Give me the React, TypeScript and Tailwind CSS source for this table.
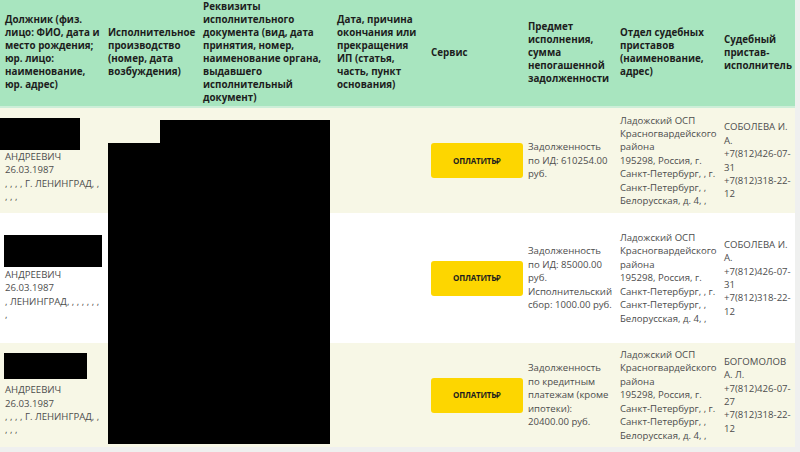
import React from "react";

const cols = "grid grid-cols-[104px_95px_134px_94px_97px_92px_104px_75px]";

const headers: string[][] = [
  ["Должник (физ.", "лицо: ФИО, дата и", "место рождения;", "юр. лицо:", "наименование,", "юр. адрес)"],
  ["Исполнительное", "производство", "(номер, дата", "возбуждения)"],
  ["Реквизиты", "исполнительного", "документа (вид, дата", "принятия, номер,", "наименование органа,", "выдавшего", "исполнительный", "документ)"],
  ["Дата, причина", "окончания или", "прекращения", "ИП (статья,", "часть, пункт", "основания)"],
  ["Сервис"],
  ["Предмет", "исполнения,", "сумма", "непогашенной", "задолженности"],
  ["Отдел судебных", "приставов", "(наименование,", "адрес)"],
  ["Судебный", "пристав-", "исполнитель"],
];

const osp = [
  "Ладожский ОСП",
  "Красногвардейского",
  "района",
  "195298, Россия, г.",
  "Санкт-Петербург, , г.",
  "Санкт-Петербург, ,",
  "Белорусская, д. 4, ,",
];

type Row = {
  height: string;
  bg: string;
  box: string;
  debtor: string[];
  subject: string[];
  bailiff: string[];
};

const rows: Row[] = [
  {
    height: "h-[105px]",
    bg: "bg-[#f7f7e6]",
    box: "ml-[-5px] h-[32px] w-[80px]",
    debtor: ["АНДРЕЕВИЧ", "26.03.1987", ", , , , Г. ЛЕНИНГРАД, ,", ", , ,"],
    subject: ["Задолженность", "по ИД: 610254.00", "руб."],
    bailiff: ["СОБОЛЕВА И.", "А.", "+7(812)426-07-", "31", "+7(812)318-22-", "12"],
  },
  {
    height: "h-[130px]",
    bg: "bg-white",
    box: "ml-[-1px] h-[32px] w-[98px] mb-px",
    debtor: ["АНДРЕЕВИЧ", "26.03.1987", ", ЛЕНИНГРАД, , , , , , ,", ","],
    subject: ["Задолженность", "по ИД: 85000.00", "руб.", "Исполнительский", "сбор: 1000.00 руб."],
    bailiff: ["СОБОЛЕВА И.", "А.", "+7(812)426-07-", "31", "+7(812)318-22-", "12"],
  },
  {
    height: "h-[104px]",
    bg: "bg-[#f7f7e6]",
    box: "ml-[-1px] h-[26px] w-[83px] mb-[4px]",
    debtor: ["АНДРЕЕВИЧ", "26.03.1987", ", , , , Г. ЛЕНИНГРАД, ,", ", , ,"],
    subject: ["Задолженность", "по кредитным", "платежам (кроме", "ипотеки):", "20400.00 руб."],
    bailiff: ["БОГОМОЛОВ", "А. Л.", "+7(812)426-07-", "27", "+7(812)318-22-", "12"],
  },
];

function Lines({ items }: { items: string[] }) {
  return (
    <>
      {items.map((t, i) => (
        <div key={i} className="whitespace-nowrap">
          {t}
        </div>
      ))}
    </>
  );
}

export default function App() {
  return (
    <div className="h-[452px] w-[800px] overflow-hidden bg-[#eff0ef] font-['Open_Sans',sans-serif]">
      <div className="relative w-[795px] overflow-hidden">
        {/* header */}
        <div
          className={`${cols} h-[108px] border-b-2 border-[#cdeed8] bg-[#a8e5bf] pb-1 text-[9.8px] font-bold leading-[13px] text-[#1d1d1d]`}
        >
          {headers.map((h, i) => (
            <div
              key={i}
              className={`flex flex-col justify-center ${i === 0 ? "pl-[5px]" : "pl-1"}`}
            >
              <Lines items={h} />
            </div>
          ))}
        </div>

        {rows.map((r, i) => (
          <div
            key={i}
            className={`${cols} ${r.height} ${r.bg} text-[9.6px] leading-[13.4px] text-[#4d4d4d]`}
          >
            <div className="flex flex-col justify-center pl-[5px]">
              <div className={`${r.box} bg-black`} />
              <Lines items={r.debtor} />
            </div>
            <div />
            <div />
            <div />
            <div className="flex items-center pl-1">
              <button
                type="button"
                className="flex h-[35px] w-[92px] items-center justify-center rounded-[3px] bg-[#fdd600] text-[8px] font-bold tracking-tight text-[#1e1e1e]"
              >
                ОПЛАТИТЬ₽
              </button>
            </div>
            <div className="flex flex-col justify-center pl-1">
              <Lines items={r.subject} />
            </div>
            <div className="flex flex-col justify-center pl-1">
              <Lines items={osp} />
            </div>
            <div className="flex flex-col justify-center pl-1">
              <Lines items={r.bailiff} />
            </div>
          </div>
        ))}

        {/* redaction over columns 2-3 */}
        <div className="absolute left-[160px] top-[120px] h-[24px] w-[170px] bg-black" />
        <div className="absolute left-[108px] top-[143px] h-[301px] w-[222px] bg-black" />
      </div>
    </div>
  );
}
